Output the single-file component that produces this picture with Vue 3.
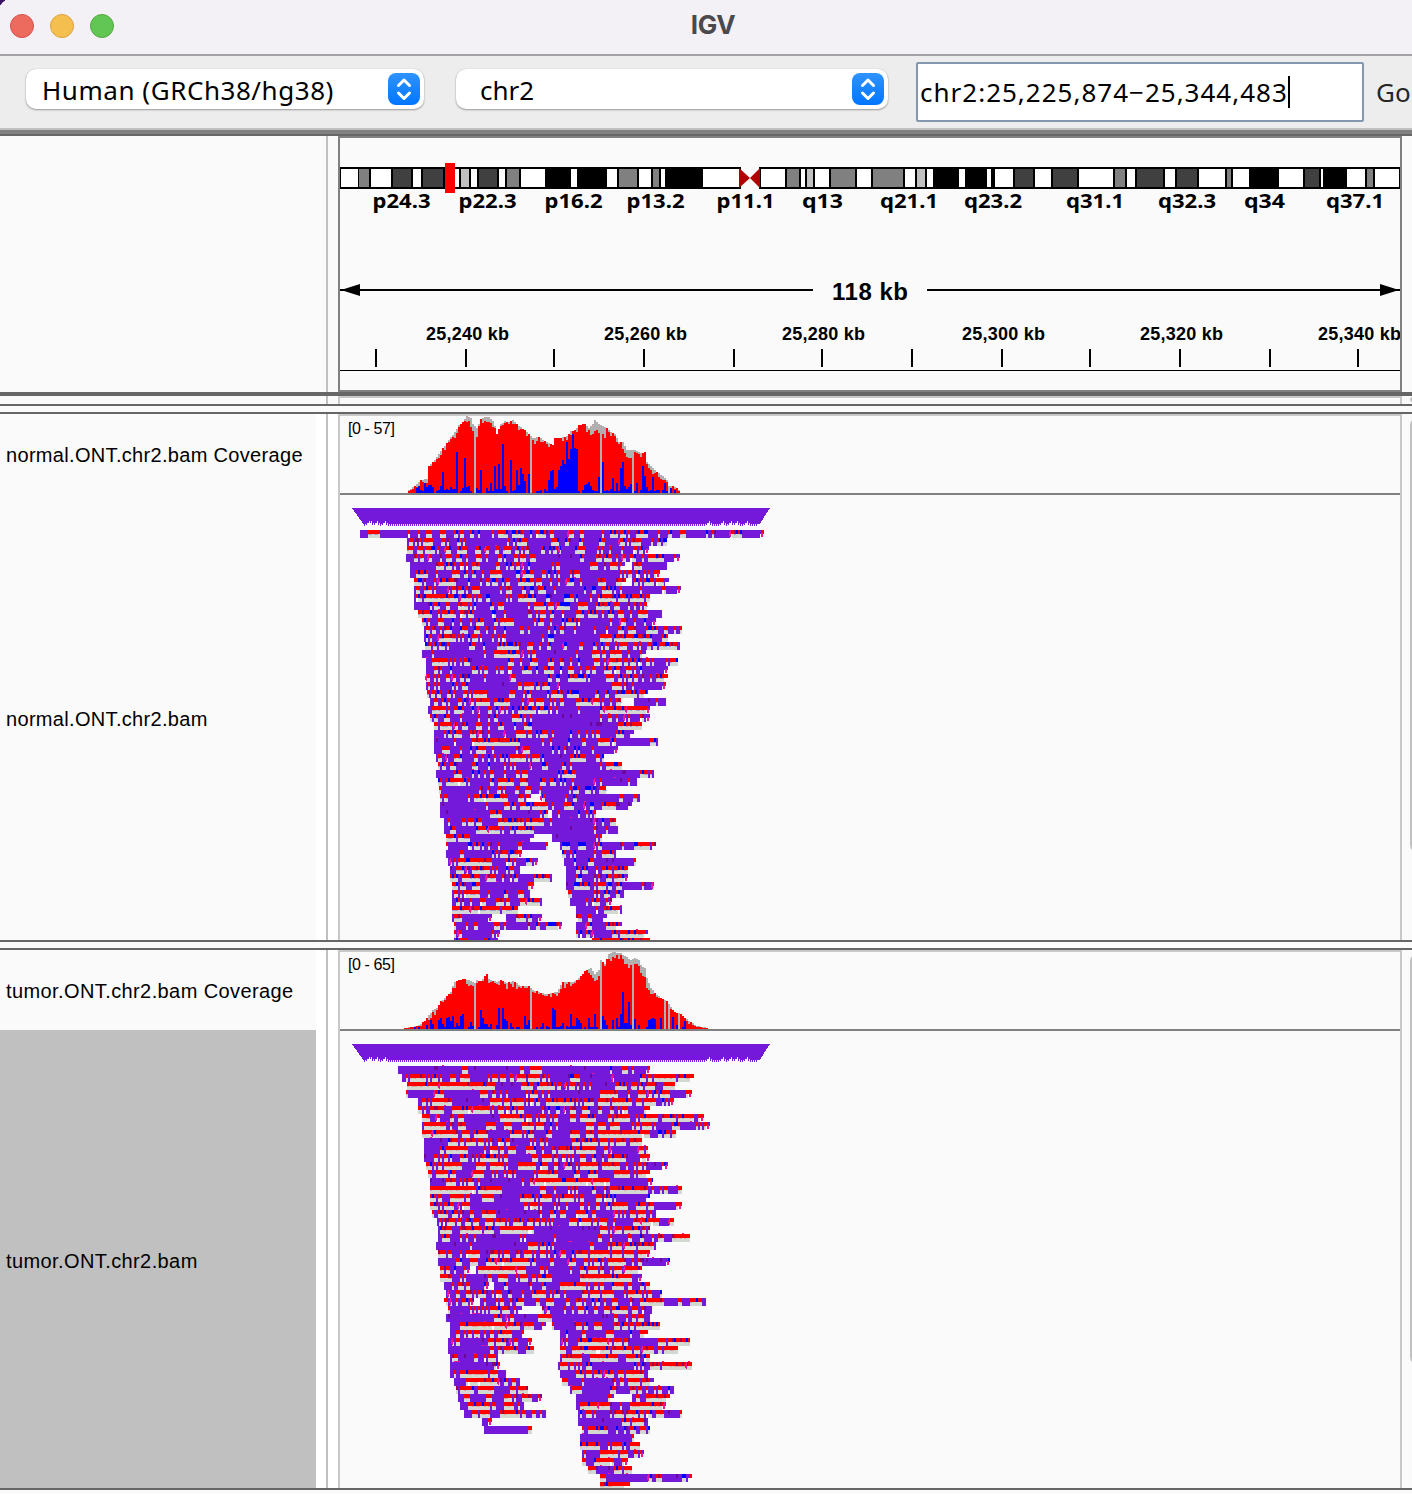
<script setup>
const bandColors = { w: '#fff', l: '#c0c0c0', g: '#808080', d: '#404040', k: '#000' }
const bands = [
  [341, 357.5, 'w'], [359, 369, 'g'], [371, 391, 'w'], [393, 411, 'd'], [413, 421, 'w'], [423, 443, 'd'],
  [455, 459, 'w'], [461, 469, 'l'], [471, 477, 'w'], [479, 497, 'd'], [499, 505, 'w'], [507, 519, 'g'],
  [521, 545, 'w'], [571, 577, 'w'], [607, 617, 'w'], [619, 637, 'g'], [639, 651, 'w'], [653, 659, 'g'],
  [661, 665, 'w'], [703, 739, 'w'], [761, 785, 'w'], [787, 799, 'g'], [801, 805, 'w'], [807, 813, 'l'],
  [815, 829, 'w'], [831, 855, 'g'], [857, 871, 'w'], [873, 903, 'g'], [905, 915, 'w'], [917, 925, 'l'],
  [927, 933, 'w'], [959, 965, 'w'], [987, 991, 'w'], [995, 1013, 'w'], [1015, 1033, 'd'], [1035, 1051, 'w'],
  [1053, 1077, 'd'], [1079, 1113, 'w'], [1115, 1125, 'g'], [1127, 1135, 'w'], [1137, 1163, 'd'],
  [1165, 1175, 'w'], [1177, 1197, 'd'], [1199, 1225, 'w'], [1227, 1231, 'g'], [1233, 1249, 'w'],
  [1279, 1303, 'w'], [1305, 1319, 'd'], [1321, 1323, 'w'], [1347, 1365, 'w'], [1367, 1373, 'g'], [1375, 1399, 'w'],
].map(([a, b, c]) => ({ x: a - 340, w: b - a, fill: bandColors[c] }))

const bandLabels = [
  ['p24.3', 372.5, 58], ['p22.3', 458.5, 58], ['p16.2', 544.5, 58], ['p13.2', 626.5, 58], ['p11.1', 716.5, 58],
  ['q13', 802, 41], ['q21.1', 880, 58], ['q23.2', 964, 58], ['q31.1', 1066, 58], ['q32.3', 1158, 58],
  ['q34', 1244, 41], ['q37.1', 1326, 58],
].map(([t, x, w]) => ({ t, x: x - 340, w }))

const ticks = [375, 465, 553, 643, 733, 821, 911, 1001, 1089, 1179, 1269, 1357].map((x) => x - 340)
const tickLabels = [
  ['25,240 kb', 426], ['25,260 kb', 604], ['25,280 kb', 782], ['25,300 kb', 962], ['25,320 kb', 1140], ['25,340 kb', 1318],
].map(([t, x]) => ({ t, x: x - 340 }))

function rng(seed) {
  let s = seed
  return () => {
    s = (s + 0x6d2b79f5) | 0
    let t = Math.imul(s ^ (s >>> 15), 1 | s)
    t = (t + Math.imul(t ^ (t >>> 7), 61 | t)) ^ t
    return ((t ^ (t >>> 14)) >>> 0) / 4294967296
  }
}

const rect = (x, y, w, h) => `M${x - 340} ${y}h${w}v${h}h${-w}z`

function buildCoverage({ top, base, blue, grey, dense, cap, seed, noise }) {
  const rand = rng(seed)
  const out = { red: '', grey: '', blue: '' }
  let i = 0
  for (let x = top[0][0]; x < top[top.length - 1][0]; x += 2) {
    while (top[i + 1][0] <= x) i++
    const [x0, y0] = top[i]
    const [x1, y1] = top[i + 1]
    let y = Math.round(y0 + ((y1 - y0) * (x - x0)) / (x1 - x0))
    let c = rand() < 0.35 ? 0 : 2 * Math.ceil(rand() * 2.4)
    for (const [a, b, n] of cap) if (x >= a && x < b) c = n + Math.round(rand() * 4)
    c = Math.min(c, Math.max(0, (base - y) / 3))
    if (grey.includes(x)) {
      out.grey += rect(x, y, 2, base - y)
      continue
    }
    if (c) out.grey += rect(x, y, 2, c)
    out.red += rect(x, y + c, 2, base - y - c)
    if (x > top[0][0] + 6 && rand() < noise) {
      const h = 2 + Math.round(Math.pow(rand(), 2) * 11)
      if (h < base - y) out.blue += rect(x, base - h, 2, h)
    }
    if (dense && x >= dense[0] && x < dense[1]) {
      const h = 22 + ((x - dense[0]) / (dense[1] - dense[0])) * 20 + rand() * 5
      out.blue += rect(x, Math.round(base - h), 2, Math.round(h))
    }
  }
  for (const [x, y] of blue) out.blue += rect(x, y, 2, base - y)
  return out
}

// Each row: [segments, solid insertion spans, mismatch spans]
function buildReads({ rows, y0, yMax, seed, density, blueRate, dither }) {
  const rand = rng(seed)
  const out = { purple: '', red: '', blue: '', grey: '', pink: '', dither: '', dark: '', white: '' }
  const bias = []
  for (let x = 340; x < 780; x += 2) bias.push(rand())
  const inside = (list, x) => list.some(([a, b]) => x >= a && x < b)
  const runLength = (mean) => 1 + Math.floor(-Math.log(1 - rand()) * mean)
  rows.forEach(([segs, solid = [], plain = []], r) => {
    const y = y0 + r * 8
    const hTop = Math.min(4, yMax - y)
    const hAll = Math.min(8, yMax - y)
    const rowBias = (rand() - 0.5) * 0.3
    for (const [a, b] of segs) {
      let x = a
      let purple = rand() < 0.5
      let pinkLast = 0
      while (x < b) {
        const local = bias[Math.round((x - 340) / 2)] || 0.5
        let p = density + rowBias + (local - 0.5) * 0.5
        if (x > 540 && x < 590) p += 0.14
        if (x > 650) p += 0.08
        p = Math.min(0.92, Math.max(0.12, p))
        let len = 2 * runLength(purple ? 0.5 + p * p * 5.6 : 0.5 + (1 - p) * 4.6)
        if (inside(solid, x)) {
          purple = true
          len = 2
        } else if (inside(plain, x)) {
          purple = false
          len = 2
        }
        len = Math.min(len, b - x)
        if (purple) {
          out.purple += rect(x, y, len, hAll)
          if (rand() < 0.06) out.dark += rect(x, y, 2, hTop)
        } else {
          for (let k = 0; k < len; k += 2) {
            const w = Math.min(2, len - k)
            const blue = rand() < blueRate || (x > 545 && x < 590 && rand() < blueRate)
            out[blue ? 'blue' : 'red'] += rect(x + k, y, w, hTop)
            if (!blue && rand() < 0.06) out.dark += rect(x + k, y, w, hTop)
          }
          if (hAll > 4) {
            out.grey += rect(x, y + 4, len, hAll - 4)
            for (let k = 0; k < len; k += 2) if (rand() < dither) out.dither += rect(x + k, y + 4, 2, 1)
            if (rand() < 0.05) out.white += rect(x, y + 4, 2, 4)
          }
          if (rand() < 0.05 && x > pinkLast + 20 && hAll > 7) {
            out.pink += rect(x, y, 1, 7)
            out.pink += rect(x - 1, y + 2, 2, 4)
            pinkLast = x
          }
        }
        if (rand() < 0.03) out.pink += rect(x, y - 1, 2, 1)
        x += len
        purple = !purple
      }
      if (rand() < 0.45) {
        out.white += rect(b - 4, y + 4, 4, 4)
        if (rand() < 0.6) out.pink += rect(b - 3, y + 3, 2, 4)
      }
    }
  })
  return out
}

const greyCols = [474, 530, 600, 632]

const normalCoverage = buildCoverage({
  base: 493, seed: 11, noise: 0.8, dense: [558, 578],
  grey: [...greyCols, 668], cap: [[470, 474, 6], [476, 478, 8], [482, 490, 2], [590, 606, 7], [622, 634, 5], [648, 656, 3]],
  top: [
    [408, 490], [412, 487], [416, 484], [420, 480], [426, 479], [428, 466], [434, 460], [440, 451], [446, 443],
    [450, 437], [454, 432], [458, 425], [462, 422], [466, 416], [470, 418], [472, 424], [476, 428], [480, 419],
    [484, 417], [488, 417], [492, 421], [494, 426], [496, 434], [500, 424], [504, 421], [508, 422], [512, 420],
    [516, 424], [520, 427], [524, 430], [528, 434], [532, 438], [538, 437], [544, 441], [552, 445], [554, 438],
    [560, 438], [566, 436], [570, 431], [574, 430], [578, 425], [584, 424], [588, 428], [592, 424], [594, 420],
    [598, 424], [606, 428], [610, 432], [614, 434], [618, 442], [622, 442], [626, 450], [634, 450], [640, 453],
    [644, 452], [646, 462], [650, 466], [656, 472], [662, 476], [666, 480], [668, 486], [672, 486], [676, 488], [680, 491],
  ],
  blue: [
    [456, 452], [464, 458], [442, 472], [480, 470], [494, 466], [498, 464], [502, 444], [510, 460], [516, 470],
    [520, 468], [522, 474], [528, 474], [550, 471], [552, 470], [562, 460], [566, 442], [570, 449], [572, 434],
    [574, 448], [576, 458], [602, 462], [598, 477], [612, 478], [620, 468], [622, 462], [642, 466], [644, 476], [652, 477],
  ],
})

const tumorCoverage = buildCoverage({
  base: 1029, seed: 23, noise: 0.75,
  grey: [...greyCols, 664, 668, 678], cap: [[474, 478, 2], [590, 600, 5], [608, 616, 4], [624, 640, 5], [640, 650, 6]],
  top: [
    [404, 1028], [410, 1027], [418, 1025], [424, 1021], [428, 1015], [432, 1010], [436, 1008], [440, 1001],
    [444, 998], [450, 992], [452, 986], [454, 982], [458, 980], [464, 979], [468, 980], [474, 983], [476, 980],
    [480, 981], [486, 974], [488, 979], [496, 982], [500, 980], [506, 983], [512, 981], [516, 983], [520, 986],
    [528, 986], [532, 990], [538, 992], [546, 994], [556, 992], [562, 982], [572, 982], [576, 980], [580, 976],
    [584, 971], [590, 968], [594, 974], [598, 970], [600, 960], [604, 964], [608, 954], [612, 952], [620, 953],
    [624, 956], [630, 960], [634, 958], [638, 960], [640, 965], [644, 968], [646, 978], [650, 988], [656, 995],
    [662, 999], [666, 1001], [670, 1007], [674, 1012], [680, 1014], [684, 1018], [690, 1022], [696, 1026], [708, 1028],
  ],
  blue: [
    [462, 1014], [452, 1016], [446, 1018], [480, 1010], [498, 1008], [502, 1008], [524, 1016], [552, 1008],
    [554, 1010], [570, 1014], [576, 1018], [594, 1014], [604, 1020], [616, 1018], [620, 1014], [622, 992],
    [628, 1002], [648, 1020], [660, 1018],
  ],
})

const normalReads = buildReads({
  y0: 530, yMax: 940, seed: 7, density: 0.62, blueRate: 0.2, dither: 0.45,
  rows: [
    [[[360, 764]], [[360, 368], [380, 407], [684, 706]]],
    [[[407, 667]]], [[[407, 649]], [[560, 575]]], [[[406, 680]], [[406, 414], [550, 580]]],
    [[[410, 625], [632, 667]], [[566, 590]]], [[[410, 660]]], [[[414, 626], [632, 669]]],
    [[[414, 681]], [[480, 500], [560, 580]]], [[[414, 650]]], [[[414, 647]], [[414, 430]]],
    [[[418, 662]]], [[[422, 656]]], [[[424, 682]], [[654, 664]]], [[[424, 668]], [[568, 600]]],
    [[[425, 680]], [[450, 468]]], [[[422, 646]], [[436, 484], [544, 576]]], [[[426, 678]], [[653, 666]]],
    [[[426, 668]]], [[[426, 668]]], [[[426, 666]], [[474, 518]], [[650, 666]]],
    [[[427, 648]]], [[[430, 621], [634, 666]], [[640, 656]], [[578, 600]]], [[[428, 650]], [], [[604, 648]]],
    [[[430, 650]], [[538, 600]]], [[[434, 642]], [[560, 618]], [[622, 642]]], [[[434, 634]]],
    [[[434, 658]], [[434, 454], [616, 650]]], [[[434, 618]]], [[[436, 604]], [[550, 570]]],
    [[[438, 622]]], [[[436, 654]], [[436, 454], [582, 640]]], [[[438, 637]], [[610, 628]], [[446, 466]]],
    [[[439, 606]]], [[[440, 531], [541, 640]], [[590, 618]], [[476, 508]]],
    [[[440, 632]], [[440, 486], [604, 632]]], [[[440, 548], [552, 596]], [[440, 490], [494, 540]]],
    [[[444, 616]], [[552, 594]], [[490, 524]]], [[[444, 618]], [[552, 594]], [[470, 500]]],
    [[[446, 534], [552, 602]], [[552, 595]]], [[[446, 548], [560, 656]], [[524, 545], [606, 622]], [[625, 650]]],
    [[[446, 522], [562, 616]]], [[[448, 538], [564, 636]], [[602, 634]], [[458, 492]]],
    [[[450, 520], [566, 628]]], [[[450, 552], [566, 628]], [], [[520, 550]]],
    [[[452, 534], [566, 654]], [[490, 528], [618, 642]]], [[[452, 530], [568, 624]]],
    [[[452, 542], [570, 612]], [], [[520, 540]]], [[[452, 518], [576, 622]], [], [[456, 500], [606, 620]]],
    [[[452, 492], [506, 542], [576, 607]], [[506, 516]]], [[[454, 562], [576, 622]], [[508, 528], [576, 586]], [[548, 560], [606, 620]]],
    [[[454, 500], [576, 648]], [], [[620, 646]]], [[[454, 498], [592, 650]], [], [[592, 650]]],
  ],
})

const tumorReads = buildReads({
  y0: 1066, yMax: 1488, seed: 41, density: 0.48, blueRate: 0.08, dither: 0.35,
  rows: [
    [[[398, 650]], [[398, 462], [464, 520], [550, 609]]], [[[402, 694]], [[552, 570], [574, 612], [660, 678]]],
    [[[407, 675]], [[494, 520], [594, 614]], [[407, 494]]], [[[406, 692]], [[440, 480], [550, 600], [670, 686]]],
    [[[418, 674]], [[446, 490]]], [[[418, 650]], [], [[450, 490]]], [[[422, 704]], [[466, 500]]],
    [[[422, 710]], [[686, 696]]], [[[422, 676]], [[480, 510]], [[424, 458], [600, 650]]],
    [[[424, 642]], [[424, 448], [512, 530]]], [[[424, 648]], [[424, 440], [612, 638]]],
    [[[424, 650]], [[424, 434], [510, 532], [612, 640]]], [[[426, 668]], [[650, 662]]], [[[428, 650]], [], [[458, 484]]],
    [[[430, 653]], [[430, 446], [484, 522], [612, 648]], [[532, 610]]], [[[430, 682]], [[502, 540], [612, 645], [668, 678]], [[430, 476]]],
    [[[430, 650]], [[490, 520], [620, 648]]], [[[430, 682]], [[652, 676]]],
    [[[432, 656]], [[492, 540]]], [[[437, 674]], [[660, 668]], [[624, 658]]],
    [[[438, 650]], [[534, 600]], [[500, 534]]], [[[438, 690]], [[478, 520]], [[670, 690]]],
    [[[436, 656]], [[436, 470], [474, 528], [556, 590]]], [[[438, 650]], [[470, 490]]],
    [[[438, 670]], [[438, 456], [642, 668]], [[482, 530]]], [[[440, 470], [476, 642]], [], [[478, 526]]],
    [[[440, 642]], [[468, 488], [562, 580]]], [[[444, 489], [494, 650]], [[510, 530]]],
    [[[446, 662]]], [[[444, 474], [480, 706]], [[662, 678], [682, 690]]],
    [[[448, 522], [542, 652]], [[450, 470]]], [[[446, 650]], [[446, 494], [520, 538], [590, 614]]],
    [[[450, 546], [552, 660]], [[560, 576], [600, 614]], [[466, 520]]], [[[450, 524], [560, 648]]],
    [[[448, 532], [560, 690]], [[464, 488], [628, 658]], [[582, 612]]], [[[448, 534], [560, 678]], [[448, 490], [512, 526]], [[582, 610]]],
    [[[450, 498], [560, 650]], [[456, 474]]], [[[450, 500], [558, 692]], [[450, 494], [594, 634]], [[670, 692]]],
    [[[450, 506], [560, 648]], [[560, 576]]], [[[454, 520], [562, 654]], [[592, 614]], [[464, 500]]],
    [[[456, 528], [570, 674]], [[586, 610]]], [[[458, 542], [576, 614], [632, 670]], [[528, 537], [578, 608]], [[648, 670]]],
    [[[460, 524], [576, 666]], [[460, 468]], [[578, 610], [646, 666]]], [[[464, 546], [578, 682]], [[492, 500], [658, 680]]],
    [[[482, 492], [578, 648]], [[482, 488], [578, 622]]], [[[484, 532], [582, 650]], [[484, 528]]],
    [[[580, 634]], [[580, 632]]], [[[580, 640]], [[592, 608]]], [[[582, 644]], [[590, 600]]],
    [[[582, 628]], [], [[594, 614]]], [[[588, 632]], [[590, 614]]], [[[600, 692]], [[602, 648], [662, 682]]],
    [[[600, 630]], [], [[600, 630]]],
  ],
})

const notches = [370, 384, 392, 398, 408, 46, 38, 31]

function insertionBand(y) {
  let d = `M12 ${y}H430L419 ${y + 17}`
  for (let x = 418; x > 24; x -= 2) {
    const near = Math.min(...notches.map((n) => Math.abs(n - x)))
    const top = near < 2 ? 13 : near < 4 ? 15 : 16
    d += `V${y + top}H${x - 1}V${y + Math.min(18, top + 2)}H${x - 2}`
  }
  return d + `V${y + 17}z`
}

const panels = [
  {
    id: 'normal', height: 526, y: 416, range: '[0 - 57]', name: 'normal.ONT.chr2.bam', coverage: normalCoverage,
    reads: normalReads, bandY: 508, lineY: 493, thumb: 434, selected: false,
  },
  {
    id: 'tumor', height: 538, y: 952, range: '[0 - 65]', name: 'tumor.ONT.chr2.bam', coverage: tumorCoverage,
    reads: tumorReads, bandY: 1044, lineY: 1029, thumb: 410, selected: true,
  },
].map((p) => ({ ...p, band: insertionBand(p.bandY) }))
</script>

<template>
  <div class="window">
    <header class="titlebar">
      <div class="lights"><i class="close"></i><i class="minimize"></i><i class="zoom"></i></div>
      <h1>IGV</h1>
    </header>

    <div class="toolbar">
      <div class="combo genome">
        <span>Human (GRCh38/hg38)</span>
        <svg width="32" height="32" viewBox="0 0 32 32"><path d="M10.5 12.5 16 7l5.5 5.5M10.5 20 16 25.500l5.500-5.500" /></svg>
      </div>
      <div class="combo chrom">
        <span>chr2</span>
        <svg width="32" height="32" viewBox="0 0 32 32"><path d="M10.5 12.5 16 7l5.5 5.5M10.5 20 16 25.500l5.500-5.500" /></svg>
      </div>
      <div class="locus"><span>chr2:25,225,874−25,344,483</span><i class="caret"></i></div>
      <span class="go">Go</span>
    </div>

    <section class="ruler-panel">
      <div class="names"></div>
      <div class="track ruler">
        <svg width="1060" height="252" viewBox="0 138 1060 252">
          <g shape-rendering="crispEdges">
            <path d="M0 167H401V189H0zM419 167H1060V189H419z" />
            <rect v-for="(b, i) in bands" :key="i" :x="b.x" y="169" :width="b.w" height="18" :fill="b.fill" />
            <rect x="105" y="163" width="10" height="30" fill="#f00" />
          </g>
          <path d="M399 168 410 178 399 188zM420 168 410 178 420 188z" fill="#b00000" />
          <g class="cyto">
            <text v-for="l in bandLabels" :key="l.t" :x="l.x" y="208" :textLength="l.w" lengthAdjust="spacingAndGlyphs">{{ l.t }}</text>
          </g>
          <g shape-rendering="crispEdges">
            <rect x="0" y="289" width="473" height="2" />
            <rect x="587" y="289" width="473" height="2" />
            <rect v-for="t in ticks" :key="t" :x="t" y="349" width="2" height="18" />
            <rect x="0" y="370" width="1060" height="1" />
          </g>
          <path d="M1 290 20 284V296zM1059 290 1040 284V296z" />
          <text class="span" x="492" y="300" textLength="76">118 kb</text>
          <g class="kb">
            <text v-for="l in tickLabels" :key="l.t" :x="l.x" y="340" textLength="83">{{ l.t }}</text>
          </g>
        </svg>
      </div>
    </section>
    <div class="divider thick"></div>
    <section class="empty-panel">
      <div class="names"></div>
      <div class="track"></div>
      <i class="thumb"></i>
    </section>

    <template v-for="p in panels" :key="p.id">
      <div class="divider gap"></div>
      <section class="data-panel" :class="p.id">
        <div class="names">
          <div class="label coverage">{{ p.name }} Coverage</div>
          <div class="label reads" :class="{ selected: p.selected }">{{ p.name }}</div>
        </div>
        <div class="gutter"></div>
        <div class="track">
          <svg width="1060" :height="p.height - 2" :viewBox="`0 ${p.y} 1060 ${p.height - 2}`" shape-rendering="crispEdges">
            <path :d="p.coverage.red" fill="#f00" />
            <path :d="p.coverage.grey" fill="#b0b0b0" />
            <path :d="p.coverage.blue" fill="#00f" />
            <rect x="0" :y="p.lineY" width="1060" height="2" fill="#808080" />
            <path :d="p.band" fill="#7418d9" />
            <path :d="p.reads.grey" fill="#d2d8d2" />
            <path :d="p.reads.dither" :fill="p.selected ? '#dda69c' : '#a4a4d4'" />
            <path :d="p.reads.red" fill="#f00" />
            <path :d="p.reads.blue" fill="#00f" />
            <path :d="p.reads.purple" fill="#7418d9" />
            <path :d="p.reads.dark" fill="#6a0078" fill-opacity=".65" />
            <path :d="p.reads.white" fill="#fafafa" />
            <path :d="p.reads.pink" fill="#f41494" />
            <text class="range" x="8" :y="p.y + 18" textLength="47">{{ p.range }}</text>
          </svg>
        </div>
        <i class="thumb" :style="{ height: p.thumb + 'px' }"></i>
      </section>
    </template>
    <div class="divider"></div>
  </div>
</template>

<style>
body {
  background: #fafafa;
}
</style>

<style scoped>
.window {
  width: 1412px;
  height: 1494px;
  overflow: hidden;
  background: #fafafa;
  color: #000;
  font-family: 'Liberation Sans', Arial, sans-serif;
}
.titlebar {
  display: grid;
  grid-template-columns: 200px 1fr 186px;
  align-items: center;
  box-sizing: border-box;
  height: 56px;
  border-bottom: 2px solid #a3a2a4;
  background: radial-gradient(circle at 10px 10px, transparent 10px, #3b1263 11px) 0 0 / 5px 5px no-repeat, #f3f0f6;
}
.lights {
  display: flex;
  gap: 16px;
  padding: 0 0 3px 10px;
}
.lights i {
  width: 24px;
  height: 24px;
  box-sizing: border-box;
  border-radius: 50%;
  border: 1px solid #d8524a;
  background: #ed6a5f;
}
.lights .minimize {
  border-color: #dca33c;
  background: #f5bf4f;
}
.lights .zoom {
  border-color: #52a940;
  background: #62c655;
}
h1 {
  margin: 0;
  padding-bottom: 4px;
  text-align: center;
  font: 700 26px/32px Inter, sans-serif;
  letter-spacing: -0.4px;
  color: #4a494b;
}
.toolbar {
  display: flex;
  box-sizing: border-box;
  height: 80px;
  padding: 13px 0 0 26px;
  border-bottom: 2px solid #666;
  background: linear-gradient(#ededed 72px, #c0c0c0 72px 74px, #808080 74px);
  font: 26px/40px 'Noto Sans', 'Open Sans', sans-serif;
  white-space: nowrap;
}
.combo {
  display: flex;
  justify-content: space-between;
  align-items: center;
  box-sizing: border-box;
  height: 40px;
  padding: 0 4px 0 16px;
  border-radius: 10px;
  background: #fff;
  box-shadow: 0 1px 2px rgba(0, 0, 0, 0.35), 0 0 1px rgba(0, 0, 0, 0.2);
}
.combo span {
  padding-top: 2px;
}
.genome {
  width: 398px;
  margin-right: 32px;
}
.genome span {
  letter-spacing: 0.55px;
}
.chrom {
  width: 432px;
  margin-right: 28px;
  padding-left: 24px;
}
.combo svg {
  border-radius: 8px;
  background: linear-gradient(#2f93ff, #0076ff);
}
.combo path {
  fill: none;
  stroke: #fff;
  stroke-width: 3;
  stroke-linecap: round;
  stroke-linejoin: round;
}
.locus {
  display: flex;
  align-items: center;
  box-sizing: border-box;
  width: 448px;
  height: 60px;
  margin-top: -7px;
  padding-left: 2px;
  border: 2px solid #8498ad;
  border-radius: 2px;
  background: #fff;
  letter-spacing: 1px;
}
.caret {
  width: 2px;
  height: 32px;
  background: #000;
}
.go {
  padding: 3px 0 0 12px;
  color: #262626;
}
section {
  display: flex;
  position: relative;
}
section::after {
  content: '';
  flex: 1;
  background: #fafafa;
}
.names {
  box-sizing: border-box;
  width: 328px;
  border-right: 2px solid #c0c0c0;
  background: #fafafa;
}
.track {
  box-sizing: border-box;
  width: 1064px;
  margin-left: 10px;
  border: 2px solid #c8c8c8;
  border-bottom: 0;
  background: #fafafa;
}
.track svg {
  display: block;
}
.ruler-panel {
  height: 256px;
}
.track.ruler {
  border: 2px solid #808080;
}
.empty-panel {
  height: 8px;
}
.empty-panel .thumb {
  height: 5px;
  top: 1px;
}
.divider {
  height: 2px;
  background: #666;
}
.divider.thick {
  height: 4px;
}
.divider.gap {
  height: 10px;
  background: linear-gradient(#666 2px, #fafafa 2px 8px, #666 8px);
}
.data-panel {
  height: 526px;
  background: #fff;
}
.data-panel.tumor {
  height: 538px;
}
.data-panel .names {
  display: flex;
  flex-direction: column;
  width: 316px;
  border: 0;
}
.gutter {
  box-sizing: border-box;
  width: 12px;
  border-right: 2px solid #c0c0c0;
  background: #fff;
}
.label {
  display: flex;
  align-items: center;
  box-sizing: border-box;
  padding-left: 6px;
  font-size: 20px;
  letter-spacing: 0.32px;
  white-space: nowrap;
}
.coverage {
  height: 80px;
  padding-top: 2px;
}
.reads {
  flex: 1;
  padding-top: 4px;
}
.tumor .label {
  letter-spacing: 0.4px;
}
.selected {
  background: #c0c0c0;
}
.thumb {
  position: absolute;
  top: 4px;
  left: 1410px;
  width: 14px;
  border-radius: 7px;
  background: #c1c1c1;
}
.cyto {
  font: 700 19.500px 'Noto Sans', 'DejaVu Sans', sans-serif;
}
.span {
  font: 700 24px 'Liberation Sans', sans-serif;
}
.kb {
  font: 700 18px 'Liberation Sans', sans-serif;
}
.range {
  font: 16px 'Liberation Sans', sans-serif;
}
</style>
